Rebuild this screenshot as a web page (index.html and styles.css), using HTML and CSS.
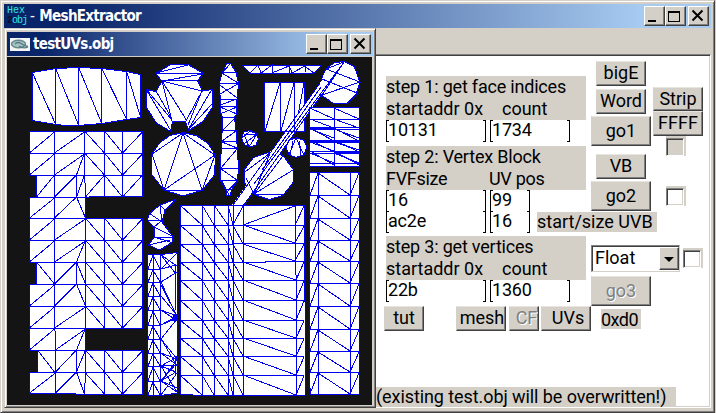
FILE: index.html
```
<!DOCTYPE html>
<html lang="en">
<head>
<meta charset="utf-8">
<title>MeshExtractor</title>
<link rel="stylesheet" href="styles.css">
</head>
<body>
<div class="window main">
  <header class="titlebar">
    <span class="app-icon"><span>Hex</span><span class="low"><b>2</b>obj</span></span>
    <h1 class="title"><i>-</i> MeshExtractor</h1>
    <div class="controls">
      <span class="ctl"><svg viewBox="0 0 21 20"><path d="M4 14h8v2H4z"/></svg></span>
      <span class="ctl"><svg viewBox="0 0 21 20"><path fill-rule="evenodd" d="M3 5h12v11H3zM4 7v8h10V7z"/></svg></span>
      <span class="ctl close"><svg viewBox="0 0 21 20"><path class="x" d="M4.500 4.500l10 10M14.500 4.500l-10 10"/></svg></span>
    </div>
  </header>
  <main class="client">
    <section class="panel">
      <div class="fields">
        <div class="label"><p>step 1: get face indices</p><p class="pair"><span>startaddr 0x</span><span>count</span></p></div>
        <div class="inputs"><span class="input wide">10131</span><span class="input mid">1734</span></div>
        <div class="label second"><p>step 2: Vertex Block</p><p class="pair near"><span>FVFsize</span><span>UV pos</span></p></div>
        <div class="inputs"><span class="input wide">16</span><span class="input small">99</span></div>
        <div class="inputs last"><span class="input wide">ac2e</span><span class="input small">16</span><span class="note">start/size UVB</span></div>
        <div class="label third"><p>step 3: get vertices</p><p class="pair"><span>startaddr 0x</span><span>count</span></p></div>
        <div class="inputs"><span class="input wide">22b</span><span class="input mid">1360</span></div>
      </div>
      <div class="actions">
        <span class="btn b-big">bigE</span>
        <span class="btn b-word">Word</span>
        <span class="btn go">go1</span>
        <span class="btn b-vb">VB</span>
        <span class="btn go">go2</span>
        <div class="select"><span>Float</span><span class="arrow"></span></div>
        <span class="btn go off">go3</span>
      </div>
      <div class="side">
        <span class="btn strip">Strip</span>
        <span class="btn ffff">FFFF</span>
        <span class="check grey"></span>
        <span class="check c2"></span>
        <span class="check c3"></span>
      </div>
      <div class="toolbar">
        <span class="btn tut">tut</span>
        <span class="btn mesh">mesh</span>
        <span class="btn cf off">CF</span>
        <span class="btn uvs">UVs</span>
        <span class="hex">0xd0</span>
      </div>
      <p class="status">(existing test.obj will be overwritten!)</p>
    </section>
  </main>
</div>

<div class="window child">
  <header class="titlebar">
    <svg class="doc-icon" viewBox="0 0 20 13"><path fill="#f4f6f6" d="M0 0h20v13H0z"/><ellipse cx="8.500" cy="6" rx="7" ry="3.800" fill="#a9c3c4" stroke="#64898f" stroke-width="1.500"/><path d="M5 6q3-3 7 0t6 2M9 8q4 3 9 1" fill="none" stroke="#52797f" stroke-width="1.300"/></svg>
    <h2 class="title">testUVs.obj</h2>
    <div class="controls">
      <span class="ctl"><svg viewBox="0 0 21 20"><path d="M4 14h8v2H4z"/></svg></span>
      <span class="ctl"><svg viewBox="0 0 21 20"><path fill-rule="evenodd" d="M3 5h12v11H3zM4 7v8h10V7z"/></svg></span>
      <span class="ctl close"><svg viewBox="0 0 21 20"><path class="x" d="M4.500 4.500l10 10M14.500 4.500l-10 10"/></svg></span>
    </div>
  </header>
  <svg class="uv" viewBox="7 57 365 348" shape-rendering="crispEdges">
    <!-- barrel -->
    <path class="s" d="M32.5 72.500L55.500 68.500 78.500 67.500 101.500 68.500 126.500 71.500 140.500 74.500V117.500L126.500 119.500 101.500 123.500 78.500 125.500 65.500 125.500 55.500 124.500 32.500 120.500z"/>
    <path d="M55.500 68V124M78.500 67V125M101.500 68V123M126.500 71V119M32.500 73L55.500 124M55.500 68L78.500 125M78.500 67L101.500 123M101.500 68L126.500 119M126.500 71L140.500 117"/>
    <!-- large grid -->
    <path class="s" d="M29.500 131.500H142.500V196.500H92.500L85.500 197.500V218.500H142.500V328.500H85.500V350.500H142.500V394.500H122.500L29.500 393.500V372.500H37.500V350.500H29.500V284.500H36.500V262.500H29.500V197.500H36.500V175.500H29.500z"/>
    <path d="M54.500 131V328L55.500 333V394M84.500 131V175L85.500 190V372L84.500 394M104.500 131V197M104.500 218V328M104.500 350V394M122.500 131V197M122.500 218V328M122.500 350V394M76.500 175V197M76.500 262V284M76.500 350V372"/>
    <path d="M29 153.500H142M29 175.500H142M29 197.500H85M29 218.500H142M29 240.500H142M29 262.500H142M29 284.500H142M29 306.500H142M29 328.500H85M29 350.500H85M29 372.500H142"/>
    <path d="M29.500 153L54.500 132M54.500 153L84.500 132M84.500 131L104.500 153M104.500 131L122.500 153M122.500 153L142.500 132
    M29.500 175L54.500 154M54.500 175L84.500 154M84.500 153L76.500 175M84.500 153L104.500 175M104.500 153L122.500 175M122.500 175L142.500 154
    M36.500 197L54.500 175M54.500 197L76.500 175M76.500 197L84.500 175M85.500 197L104.500 175M104.500 175L122.500 197M122.500 197L142.500 175
    M29.500 218L54.500 198M54.500 218L76.500 197M76.500 197L85.500 218
    M29.500 240L54.500 219M54.500 240L85.500 219M85.500 218L104.500 240M104.500 218L122.500 240M122.500 240L142.500 219
    M29.500 262L54.500 241M54.500 262L85.500 241M85.500 240L76.500 262M85.500 240L104.500 262M104.500 240L122.500 262M122.500 262L142.500 241
    M36.500 262L54.500 284M54.500 284L76.500 262M76.500 262L85.500 284M85.500 262L104.500 284M104.500 262L122.500 284M122.500 284L142.500 263
    M29.500 306L54.500 285M54.500 306L76.500 284M76.500 284L85.500 306M85.500 284L104.500 306M104.500 284L122.500 306M122.500 306L142.500 285
    M29.500 328L54.500 307M54.500 328L85.500 307M85.500 306L104.500 328M104.500 306L122.500 328M122.500 328L142.500 307
    M29.500 350L54.500 329M55.500 350L85.500 329M85.500 328L76.500 350
    M37.500 350L54.500 372M55.500 372L76.500 350M76.500 372L85.500 350M85.500 350L104.500 372M104.500 350L122.500 372M122.500 372L142.500 351
    M29.500 393L55.500 373M55.500 393L76.500 372M76.500 372L84.500 394M84.500 372L104.500 394M104.500 372L122.500 394M122.500 394L142.500 373"/>
    <!-- three-armed piece -->
    <path class="s" d="M155.500 73.500L170 65 177 64.500 188 64.500 203.500 73.500 197.500 80.500 202.500 91 212.500 89.500V107L203 121.500 188.500 130.500 185.500 121.500H172.500L170.500 131.500 156.500 123 146 107V89.500L156 91.500 162 81z"/>
    <path d="M156 73L188 65M156 73.500H203M162 81L203 74M162 80.500H198M162 81L202 91M162 81L172 121M162 81L187 121M202 91L186 121M146 89L171 131M146 89L172 120M156 91L172 119M212 89L188 130M202 91L188 125M212 104L188 130"/>
    <!-- disc -->
    <path class="s" d="M183 132.500L197 136 208 143.500 215.500 155 214.500 175 202.500 190 183 196 164 190 152 175 151.500 154.500 160 142.500 170 135.500z"/>
    <path d="M183 133L152 154M183 133L164 190M183 133L202 190M183 133L215 155L164 190M152 154L164 190M164 190.500H202L215 155"/>
    <!-- spindle -->
    <path class="s" d="M227 63.500L222.500 72 219.500 82.500 220.500 106.500 220.500 113.500 223 117.500 221.500 141 220.500 168V180.500L226 191 227 195.500H230.500L231.500 189.500 237.500 180.500 238.500 168 237.500 151.500 236 130 234.500 117.500 237 113 236.500 106.500 238.500 83.500 236 72.500 230.500 63.500z"/>
    <path d="M222 72.500H236M220 83.500H238M220 99.500H237M220 106.500H237M223 117.500H235M223 130.500H236M222 141.500H236M221 148.500H237M220 168.500H238M220 180.500H238M226 189.500H232M223 72L230 64M222 73L238 83M220 94L238 84M220 85L237 98M220 105L237 99M220 107L237 114M220 114L237 107M223 130L235 118M222 141L236 131M222 142L237 148M221 168L237 149M221 169L237 180M222 181L229 195M237 181L227 192"/>
    <!-- small discs and bar -->
    <path class="s" d="M242.500 65.500H321.500L313.500 73.500H250.500z"/>
    <path d="M250 73L258 65L261 73L272 65V73L289 66V73M289 65L292 73L305 66V72M303 65L314 73"/>
    <path class="s" d="M264.500 82.500H304.500V131.500H264.500z"/>
    <path d="M280.500 82V131M294.500 82V131M265 131L280 83M281 131L294 83M295 131L304 83"/>
    <path class="s" d="M250 130.500L256 133 258.500 139 256 145 250 147 244 144.500 241.500 138 244 132z"/>
    <path d="M242 138L250 131L257 134L249 147L244 134H257M244 144L257 134"/>
    <path class="s" d="M344.500 61.500L354.500 67 360 82.500 356 94.500 347.500 103 333.500 103.500 322.500 96 321 80 326 68.500 335 62.500z"/>
    <path class="s" d="M269 152.500L283 155.500 293.500 170V182L283 195.500 269 199.500 254 194.500 245 183.500 244 170 253.500 157.500z"/>
    <path class="w" d="M344 62L320.500 82 232 205H243L250.500 195 322.500 94z"/>
    <path class="s" d="M296 137.500L304 140.500 307 147 304 154.500 296 157.500 289 155 286 147 289 140.500z"/>
    <path d="M289 155L296 138L304 155M290 155L293 141M301 155L299 141"/>
    <path d="M264.500 131.500H304M294.500 95V131M320 83L233 205M322 94L244 205M344 62L254 184M321 87L262 170"/>
    <path d="M344 62L326 69L360 82M322 79L357 93M322 95L360 82M322 95L344 62M245 172L270 153M293 170L254 194L270 153M254 194L283 156M254 194.500H283M246 178L254 194"/>
    <!-- dense block -->
    <path class="s" d="M309.500 107.500H359.500V166.500H309.500z"/>
    <path d="M334.500 107V166M309 119.500H359M309 127.500H359M309 129.500H359M309 140.500H359M309 142.500H359M309 151.500H359M309 153.500H359M309 163.500H359"/>
    <path d="M310 108L334 119M334 108L359 119M310 119L334 128M334 119L359 128M310 128L334 141M334 128L359 141M310 129L334 138M334 129L359 138M310 140L334 152M334 140L359 152M310 142L334 151M334 142L359 150M310 151L334 165M334 151L359 165M310 153L334 163M334 153L359 163"/>
    <path d="M309 128.500H334M309 141.500H359M334 152.500H359"/>
    <!-- right column -->
    <path class="s" d="M309.500 172.500H359V394.500H310.500L309.500 380z"/>
    <path d="M318.500 172V394M350.500 172V394M309 195.500H359M309 218.500H359M309 240.500H359M309 261.500H359M309 283.500H359M309 306.500H359M309 329.500H359M309 351.500H359M309 372.500H359"/>
    <path d="M310 195L318 173L350 195L359 173M310 218L318 196L350 218L359 196M310 240L318 219L350 240L359 219M310 261L318 241L350 261L359 241M310 283L318 262L350 283L359 262M310 306L318 284L350 306L359 284M310 329L318 307L350 329L359 307M310 351L318 330L350 351L359 330M310 372L318 352L350 372L359 352M310 394L318 373L350 394L359 373"/>
    <!-- middle block -->
    <path class="s" d="M180.500 205.500H304.500L305.500 395.500H205L180.500 394.500z"/>
    <path d="M202.500 205V395M214.500 205V395M228.500 205V395M233.500 205V395M243.500 205V395M295.500 205V270L296.500 280V395M180 225.500H304M180 244.500H228L240 243.500H304M180 262.500H265V261.500H304M180 280.500H304M180 300.500H304M180 320.500H304M180 338.500H304M180 356.500H304M180 375.500H304"/>
    <path d="M180 205L202 225M202 205L214 225M214 205L228 225M228 205L233 225L243 206M243 225L295 206M295 225L304 206
    M180 225L202 244M202 225L214 244M214 225L228 244M228 225L233 244M233 225L243 244M243 225L295 243L304 226
    M180 244L202 262M202 244L214 262M214 244L228 262M228 244L233 262M233 244L243 262M243 244L295 261L304 244
    M180 262L202 280M202 262L214 280M214 262L228 280M228 262L233 280M233 262L243 280M243 262L296 280L304 262
    M180 280L202 300M202 280L214 300M214 280L228 300M228 280L233 300M233 280L243 300M243 280L296 300L304 281
    M180 300L202 320M202 300L214 320M214 300L228 320M228 300L233 320M233 300L243 320M243 300L296 320L304 301
    M180 320L202 338M202 320L214 338M214 320L228 338M228 320L233 338M233 320L243 338M243 320L296 338L304 321
    M180 338L202 356M202 338L214 356M214 338L228 356M228 338L233 356M233 338L243 356M243 338L296 356L304 339
    M180 356L202 375M202 356L214 375M214 356L228 375M228 356L233 375M233 356L243 375M243 356L296 375L304 357
    M180 375L202 395M202 375L214 395M214 375L228 395M228 375L233 395M233 375L243 395M243 375L296 395L304 376"/>
    <!-- hook -->
    <path class="s" d="M175 199.500L160 205 149.500 213.500 147.500 220 153.500 227 154.500 237 148.500 245 159.500 250 172 242.500 172.500 236 162 222 165 210 174 202z"/>
    <path d="M160 205L165 210L175 200M160 205L162 222L149 213M148 220.500H162L154 227L172 236M154 237.500H172M154 237L172 242.500M149 245L170 240M154 227L155 236"/>
    <!-- narrow strip -->
    <path class="s" d="M147.500 254.500H161L177 252.500 177.500 393 161 395.500H147.500z"/>
    <path d="M153.500 254V395M160.500 254V395M147 269.500H161M147 282.500H161M147 296.500H161M147 310.500H161M147 325.500H161M147 339.500H161M147 353.500H161M147 366.500H161M147 381.500H161M175.500 265V310M175.500 360V375"/>
    <path d="M148 269L153 255L160 269M148 282L153 270L160 282M148 296L153 283L160 296M148 310L153 297L160 310M148 325L153 311L160 325M148 339L153 326L160 339M148 353L153 340L160 353M148 366L153 354L160 366M148 381L153 367L160 381M148 395L153 382L160 395"/>
    <path d="M161 255L176 274M161 269L177 253M161 255L177 266M161 269L176 265M161 282L177 272M161 282L177 317M161 285L176 314M161 296L176 314M161 310L177 316L161 325L177 318M161 310L176 320M161 339L177 319M161 339L177 359L161 353L177 365L161 366L177 357M161 339L176 364L161 381L177 360M161 381L176 372L161 366M161 366L177 392L161 381M161 395L177 373M161 381L177 388"/>
    <path class="dot" d="M173 314h4v7h-4zM175 356h3v5h-3z"/>
  </svg>
</div>
</body>
</html>
```
FILE: styles.css
```
* { box-sizing: border-box; }
html, body { margin: 0; width: 716px; height: 413px; overflow: hidden; }
body { position: relative; background: #d4d0c8; color: #000; font: 18px/22px Roboto, "Liberation Sans", sans-serif; }
p, h1, h2 { margin: 0; font-weight: inherit; font-size: inherit; }

.window {
  display: flex; flex-direction: column; background: #d4d0c8; padding: 2px;
  border: 1px solid; border-color: #d4d0c8 #404040 #404040 #d4d0c8;
  box-shadow: inset 1px 1px #fff, inset -1px -1px #808080;
}
.main { width: 715px; height: 413px; padding: 3px; }
.child { position: absolute; left: 4px; top: 28px; width: 372px; height: 380px; padding: 3px 2px 2px 2px; }

.titlebar {
  display: flex; align-items: center; height: 24px; flex: none; color: #fff;
  background: linear-gradient(90deg, #0a246a 10%, #a6caf0 90%);
}
.title { flex: 1; font: bold 15px/24px "DejaVu Sans Condensed", "DejaVu Sans", sans-serif; font-stretch: condensed; letter-spacing: -0.7px; }
.title i { font-style: normal; font-weight: normal; letter-spacing: 0.5px; }
.app-icon { display: flex; flex-direction: column; width: 26px; padding-left: 3px; font: 10px/10px "Liberation Mono", monospace; color: #2de8e4; }
.app-icon .low { letter-spacing: -1px; }
.app-icon b { color: #06101f; }
.doc-icon { width: 20px; height: 13px; margin: 0 3px; }
.controls { display: flex; padding-right: 2px; }
.ctl {
  width: 21px; height: 20px; background: #d4d0c8; border: 1px solid; border-color: #fff #404040 #404040 #fff;
  box-shadow: inset -1px -1px #808080;
}
.ctl svg { display: block; width: 21px; height: 20px; margin: -1px; }
.close { margin-left: 2px; }
.x { fill: none; stroke: #000; stroke-width: 2; }

.client { height: 354px; margin: 26px 0 0; border: 1px solid; border-color: #808080 #fff #fff #808080; box-shadow: inset 0 1px #404040, inset -1px -1px #d4d0c8; background: #fff; }
.panel { display: grid; grid-template-columns: 200px 65px auto; grid-template-rows: 250px 81px 19px; margin-left: 371px; padding-top: 1px; }
.fields { margin: 20px 0 0 10px; width: 200px; }
.label { height: 44px; background: #d4d0c8; white-space: nowrap; letter-spacing: -0.2px; }
.label.second { margin-top: 5px; }
.label.third { margin-top: 4px; }
.pair { display: flex; letter-spacing: 0; }
.pair span:first-child { width: 116px; }
.pair.near span:first-child { width: 103px; }
.pair.near { letter-spacing: -0.3px; }
.inputs { display: flex; gap: 4px; height: 21px; white-space: nowrap; }
.input { position: relative; flex: none; height: 20px; line-height: 20px; padding-left: 2px; letter-spacing: -0.2px; }
.input::before, .input::after { content: ""; position: absolute; top: 0; width: 2px; height: 20px; border: 1px solid #000; }
.input::before { left: 0; border-right: 0; }
.input::after { right: 0; border-left: 0; }
.wide { width: 100px; }
.mid { width: 80px; }
.small { width: 40px; }
.note { height: 20px; width: 120px; flex: none; line-height: 20px; margin: 1px 0 0 3px; background: #d4d0c8; }

.btn {
  display: block; flex: none; width: 50px; height: 25px; line-height: 22px; text-align: center; background: #d4d0c8; white-space: nowrap; overflow: hidden;
  border: 1px solid; border-color: #e8e5df #404040 #404040 #d4d0c8; box-shadow: inset -1px -1px #808080;
}
.off { color: #808080; text-shadow: 1px 1px #fff; }
.actions { display: flex; flex-direction: column; margin: 5px 0 0 15px; width: 90px; }
.actions .btn { margin-left: 5px; }
.actions .b-word { margin-top: 3px; }
.actions .go { width: 60px; height: 30px; line-height: 27px; margin: 2px 0 0; }
.actions .b-vb { margin-top: 8px; }
.select { display: flex; justify-content: space-between; width: 89px; height: 27px; margin-top: 34px; padding-left: 3px; line-height: 23px; background: #fff; border: 1px solid; border-color: #808080 #d4d0c8 #d4d0c8 #808080; box-shadow: inset 1px 1px #404040; }
.arrow { width: 20px; height: 23px; margin: 1px 0; background: #d4d0c8; border: 1px solid; border-color: #fff #404040 #404040 #fff; box-shadow: inset -1px -1px #808080; }
.arrow::before { content: ""; display: block; width: 0; margin: 9px 0 0 4px; border: 5px solid transparent; border-top-color: #000; border-bottom: 0; }
.actions .off { margin-top: 4px; }
.side { display: flex; flex-direction: column; margin: 31px 0 0 12px; width: 51px; }
.strip { height: 24px; }
.ffff { height: 25px; }
.check { width: 20px; height: 20px; flex: none; background: #d4d0c8; margin-left: 13px; padding-top: 2px; }
.check::before { content: ""; display: block; width: 16px; height: 16px; background: #fff; border: 1px solid; border-color: #808080 #fff #fff #808080; box-shadow: inset 1px 1px #404040, inset -1px -1px #d4d0c8; }
.check.grey::before { background: #d4d0c8; }
.c2 { margin-top: 30px; }
.c3 { margin: 42px 0 0 30px; }
.toolbar { grid-column: 1 / 4; display: flex; margin-left: 8px; }
.tut { width: 40px; }
.mesh { width: 50px; margin-left: 32px; padding-left: 2px; }
.cf { width: 30px; margin-left: 3px; padding-left: 5px; }
.uvs { margin-left: 2px; padding-left: 4px; }
.hex { width: 40px; height: 20px; line-height: 21px; margin: 3px 0 0 10px; background: #d4d0c8; letter-spacing: -0.5px; }
.status { grid-column: 1 / 4; width: 300px; height: 19px; line-height: 20px; background: #d4d0c8; white-space: nowrap; letter-spacing: -0.08px; }

.uv { display: block; width: 365px; height: 348px; margin-top: 1px; background: #141414; }
.uv path { fill: none; stroke: #0000f0; stroke-width: 1; }
.uv .s { fill: #fff; }
.uv .w { fill: #fff; stroke: none; }
.uv .dot { fill: #0000f0; stroke: none; }
.uv path.w { fill: #fff; stroke: none; }
.uv path.s { fill: #fff; }
.uv path.dot { fill: #0000f0; stroke: none; }
.uv path.dot, .uv path.w { stroke-width: 0; }
```
